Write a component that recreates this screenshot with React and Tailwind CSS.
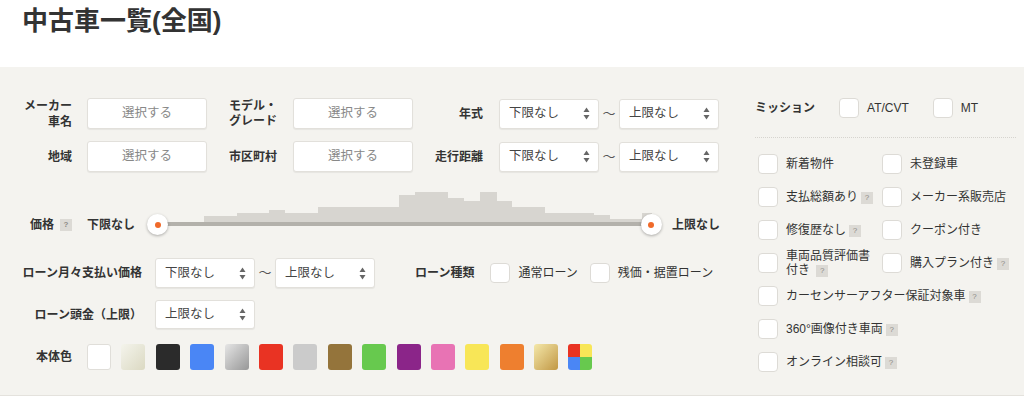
import React from 'react';

const Arrows = () => (
  <svg width="7" height="13" viewBox="0 0 7 13" className="shrink-0">
    <path d="M3.5 0.5 L6.5 5 L0.5 5 Z" fill="#666" />
    <path d="M3.5 12.5 L6.5 8 L0.5 8 Z" fill="#666" />
  </svg>
);

const Select = ({ value, h = 'h-[30px]' }) => (
  <div className={`w-[100px] ${h} bg-white border border-[#e2e0db] rounded-[3px] shadow-[0_1px_1px_rgba(0,0,0,0.06)] flex items-center justify-between pl-[9px] pr-[8px] text-[12.5px] text-[#444]`}>
    <span>{value}</span>
    <Arrows />
  </div>
);

const Picker = () => (
  <div className="w-[120px] h-[31px] bg-white border border-[#e2e0db] rounded-[3px] shadow-[0_1px_1px_rgba(0,0,0,0.06)] flex items-center justify-center text-[12.5px] text-[#888]">
    選択する
  </div>
);

const Help = () => (
  <span className="inline-block ml-[3px] w-[12px] h-[12px] bg-[#dcdad5] text-[#8d8b86] text-[8px] leading-[12px] text-center align-middle">?</span>
);

const Box = () => (
  <span className="w-[20px] h-[20px] shrink-0 bg-white border border-[#dddbd6] rounded-[4px]" />
);

const Range = () => <span className="w-[20px] text-center text-[13px] text-[#555]">〜</span>;

// histogram columns: [x, width, top] in slider coordinates
const bars = [
  [57, 33, 28], [90, 32, 25], [122, 16, 22], [138, 33, 25], [171, 81, 19],
  [252, 16, 7], [268, 33, 4], [301, 16, 10], [317, 16, 13], [333, 17, 4],
  [350, 15, 13], [365, 33, 19], [398, 49, 25], [447, 16, 27], [463, 32, 31],
  [495, 10, 25]
];

const Handle = ({ side }) => (
  <div className={`absolute ${side} top-[9px] w-[21px] h-[21px] rounded-full bg-white shadow-[0_1px_3px_rgba(0,0,0,0.3)] flex items-center justify-center`}>
    <span className="w-[6px] h-[6px] rounded-full bg-[#f06a2a]" />
  </div>
);

const swatches = [
  'bg-white border border-[#e0ded9]',
  'bg-gradient-to-br from-[#f4f4ec] to-[#dbd9c2]',
  'bg-[#2b2b2b]',
  'bg-[#4a86f5]',
  'bg-gradient-to-br from-[#e6e6e6] to-[#979797]',
  'bg-[#e93323]',
  'bg-[#cbcbcb]',
  'bg-[#94743b]',
  'bg-[#67c94e]',
  'bg-[#8b2589]',
  'bg-[#e873b4]',
  'bg-[#f8e657]',
  'bg-[#ee7f2f]',
  'bg-gradient-to-br from-[#f4e8a9] to-[#c19843]',
];

const Check = ({ children, className = '' }) => (
  <div className={`flex items-center h-[20px] gap-[8px] ${className}`}>
    <Box />
    <span className="text-[12px] text-[#333] leading-[14px] whitespace-nowrap">{children}</span>
  </div>
);

export default function App() {
  return (
    <div className="w-[1024px] h-[398px] bg-white font-['Liberation_Sans','Noto_Sans_CJK_JP',sans-serif] text-[#333] overflow-hidden">
      <div className="h-[67px] px-[22px]">
        <h1 className="text-[26px] leading-[43px] font-bold text-[#333]">中古車一覧(全国)</h1>
      </div>

      <div className="h-[329px] bg-[#f4f3ef] border-b border-[#e4e2dd] flex">
        {/* search fields */}
        <div className="w-[740px] pl-[22px] pr-[20px] pt-[31px]">
          <div className="flex items-center h-[31px]">
            <div className="w-[50px] text-right text-[12px] font-bold leading-[16px]">メーカー<br />車名</div>
            <div className="ml-[15px]"><Picker /></div>
            <div className="ml-[22px] w-[49px] text-[12px] font-bold leading-[15px]">モデル・<br />グレード</div>
            <div className="ml-[15px]"><Picker /></div>
            <div className="w-[70px] text-right text-[12px] font-bold">年式</div>
            <div className="ml-[16px] flex items-center"><Select value="下限なし" /><Range /><Select value="上限なし" /></div>
          </div>
          <div className="flex items-center h-[31px] mt-[12px]">
            <div className="w-[50px] text-right text-[12px] font-bold">地域</div>
            <div className="ml-[15px]"><Picker /></div>
            <div className="ml-[22px] w-[49px] text-[12px] font-bold">市区町村</div>
            <div className="ml-[15px]"><Picker /></div>
            <div className="w-[70px] text-right text-[12px] font-bold">走行距離</div>
            <div className="ml-[16px] flex items-center"><Select value="下限なし" /><Range /><Select value="上限なし" /></div>
          </div>

          <div className="flex items-center h-[40px] mt-[33px]">
            <div className="w-[50px] flex items-center justify-end gap-[3px] text-[12px] font-bold">
              <span>価格</span><Help />
            </div>
            <span className="ml-[15px] text-[12px] font-bold">下限なし</span>
            <div className="relative flex-1 h-[40px] ml-[12px]">
              <svg className="absolute left-0 top-[-17px]" width="518" height="34" viewBox="0 0 518 34">
                {bars.map(([x, w, y], i) => (
                  <rect key={i} x={x} y={y} width={w} height={34 - y} fill="#d7d5d0" />
                ))}
              </svg>
              <div className="absolute left-[10px] right-[10px] top-[17px] h-[4px] bg-[#b3b1ab]" />
              <Handle side="left-0" />
              <Handle side="right-0" />
            </div>
            <span className="ml-[10px] text-[12px] font-bold">上限なし</span>
          </div>

          <div className="flex items-center h-[30px] mt-[13px]">
            <div className="w-[120px] text-right text-[12px] font-bold">ローン月々支払い価格</div>
            <div className="ml-[13px] flex items-center"><Select value="下限なし" /><Range /><Select value="上限なし" /></div>
            <div className="ml-[40px] text-[12px] font-bold">ローン種類</div>
            <div className="ml-[16px] flex items-center gap-[12px]">
              <Check>通常ローン</Check>
              <Check>残価・据置ローン</Check>
            </div>
          </div>
          <div className="flex items-center h-[29px] mt-[12px]">
            <div className="w-[120px] text-right text-[12px] font-bold">ローン頭金（上限）</div>
            <div className="ml-[13px]"><Select value="上限なし" h="h-[29px]" /></div>
          </div>

          <div className="flex items-center h-[26px] mt-[15px]">
            <div className="w-[50px] text-right text-[12px] font-bold">本体色</div>
            <div className="ml-[15px] flex items-center gap-[10.4px]">
              {swatches.map((c, i) => (
                <span key={i} className={`w-[24px] h-[26px] rounded-[3px] ${c}`} />
              ))}
              <span className="w-[24px] h-[26px] rounded-[3px] overflow-hidden grid grid-cols-2 grid-rows-2">
                <span className="bg-[#e93323]" />
                <span className="bg-[#f8e657]" />
                <span className="bg-[#4a86f5]" />
                <span className="bg-[#67c94e]" />
              </span>
            </div>
          </div>
        </div>

        {/* options */}
        <div className="flex-1 pl-[15px] pr-[8px] pt-[31px]">
          <div className="flex items-center h-[20px]">
            <span className="text-[12px] font-bold">ミッション</span>
            <div className="ml-[24px]"><Check>AT/CVT</Check></div>
            <div className="ml-[24px]"><Check>MT</Check></div>
          </div>
          <div className="mt-[19px] border-t border-dotted border-[#d6d4cf]" />
          <div className="pt-[16px] pl-[3px] grid grid-cols-[124px_1fr] gap-y-[13px]">
            <Check>新着物件</Check>
            <Check>未登録車</Check>
            <Check>支払総額あり<Help /></Check>
            <Check>メーカー系販売店</Check>
            <Check>修復歴なし<Help /></Check>
            <Check>クーポン付き</Check>
            <Check>車両品質評価書<br />付き <Help /></Check>
            <Check>購入プラン付き<Help /></Check>
            <Check className="col-span-2">カーセンサーアフター保証対象車<Help /></Check>
            <Check className="col-span-2">360°画像付き車両<Help /></Check>
            <Check className="col-span-2">オンライン相談可<Help /></Check>
          </div>
        </div>
      </div>
    </div>
  );
}
